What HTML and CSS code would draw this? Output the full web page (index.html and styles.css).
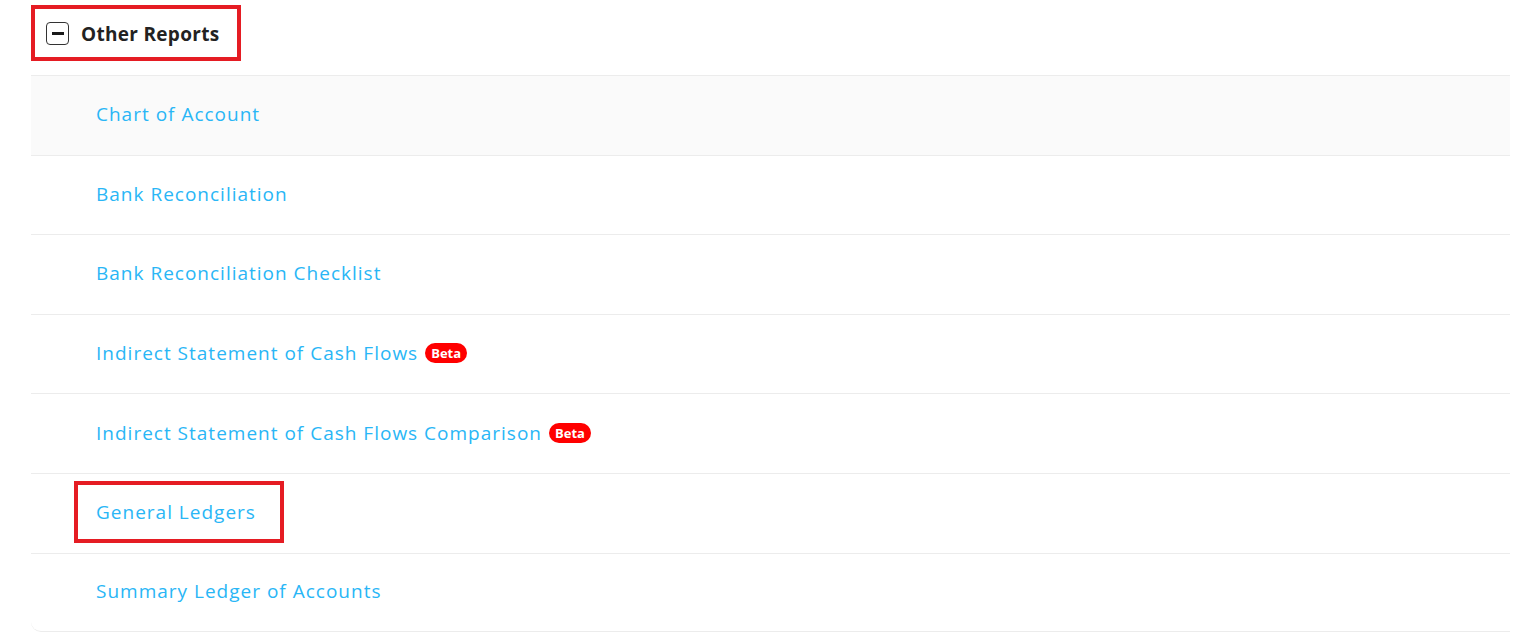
FILE: index.html
```html
<!DOCTYPE html>
<html>
<head>
<meta charset="utf-8">
<link rel="stylesheet" href="styles.css">
</head>
<body>
<div class="section">
  <div class="header">
    <div class="header-box">
      <span class="toggle"><span class="bar"></span></span>
      <span class="title">Other Reports</span>
    </div>
  </div>
  <ul class="list">
    <li class="row shaded"><a class="link">Chart of Account</a></li>
    <li class="row"><a class="link">Bank Reconciliation</a></li>
    <li class="row"><a class="link">Bank Reconciliation Checklist</a></li>
    <li class="row"><a class="link">Indirect Statement of Cash Flows</a><span class="beta">Beta</span></li>
    <li class="row"><a class="link">Indirect Statement of Cash Flows Comparison</a><span class="beta">Beta</span></li>
    <li class="row"><a class="link marked">General Ledgers</a></li>
    <li class="row last"><a class="link">Summary Ledger of Accounts</a></li>
  </ul>
</div>
</body>
</html>
```
FILE: styles.css
```css
html, body {
  margin: 0;
  padding: 0;
  background: #fff;
}
body {
  font-family: "Open Sans", "Liberation Sans", sans-serif;
}
.section {
  margin-left: 31px;
  width: 1479px;
}
.header {
  height: 75px;
  padding-top: 5px;
  box-sizing: border-box;
}
.header-box {
  display: inline-flex;
  align-items: center;
  box-sizing: border-box;
  height: 56px;
  width: 210px;
  border: 4px solid #e51c23;
  padding-left: 11px;
  gap: 12px;
}
.toggle {
  width: 23px;
  height: 23px;
  box-sizing: border-box;
  border: 1.5px solid #333;
  border-radius: 4px;
  display: flex;
  align-items: center;
  justify-content: center;
}
.bar {
  width: 12px;
  height: 3px;
  background: #1a1a1a;
}
.title {
  font-weight: 700;
  font-size: 19px;
  letter-spacing: 0.3px;
  color: #222;
  padding-top: 2px;
}
.list {
  list-style: none;
  margin: 0;
  padding: 0;
}
.row {
  height: 79.6px;
  box-sizing: border-box;
  border-top: 1px solid #ececec;
  display: flex;
  align-items: center;
  padding-left: 65px;
  padding-bottom: 2px;
}
.row.shaded {
  background: #fafafa;
}
.row.last {
  border-bottom: 1px solid #ececec;
  border-bottom-left-radius: 10px;
}
.link {
  position: relative;
  font-size: 19px;
  letter-spacing: 1px;
  color: #29b6f6;
  cursor: pointer;
}
.marked::after {
  content: "";
  position: absolute;
  left: -22px;
  top: -18px;
  width: 210px;
  height: 62px;
  box-sizing: border-box;
  border: 4px solid #e51c23;
}
.beta {
  margin-left: 7px;
  background: #ff0000;
  color: #fff;
  font-weight: 700;
  font-size: 13px;
  line-height: 20px;
  padding: 0 6px;
  border-radius: 10px;
}
```
